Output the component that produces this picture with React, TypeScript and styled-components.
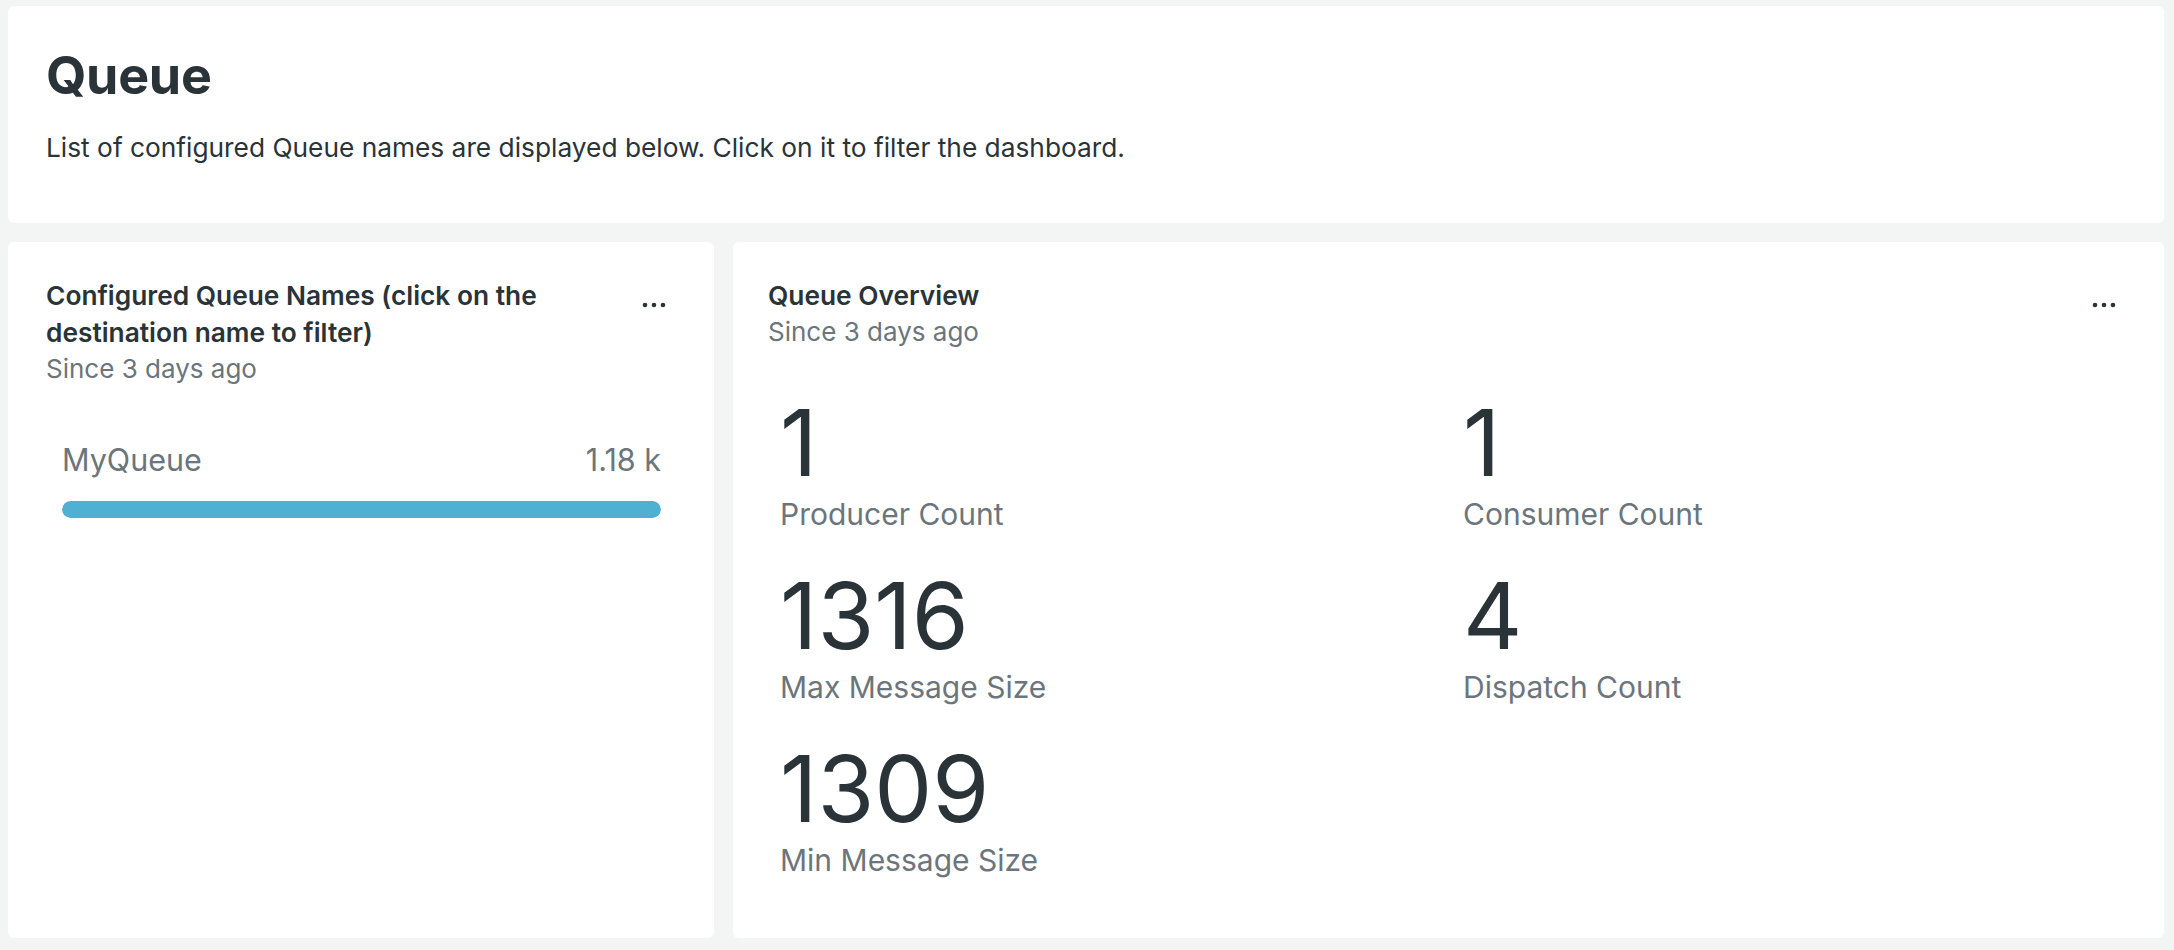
import React from 'react';
import styled, { createGlobalStyle } from 'styled-components';

const GlobalStyle = createGlobalStyle`
  html, body {
    margin: 0;
    padding: 0;
    background: #f3f4f4;
  }
  body {
    font-family: Inter, "Open Sans", "Liberation Sans", sans-serif;
    color: #293338;
  }
  * {
    box-sizing: border-box;
  }
`;

const stats = [
  { value: '1', label: 'Producer Count' },
  { value: '1', label: 'Consumer Count' },
  { value: '1316', label: 'Max Message Size' },
  { value: '4', label: 'Dispatch Count' },
  { value: '1309', label: 'Min Message Size' },
];

const queues = [{ name: 'MyQueue', value: '1.18 k', share: 100 }];

function MoreButton() {
  return (
    <IconButton title="More">
      <svg width="24" height="8" viewBox="0 0 24 8" fill="#293338">
        <circle cx="3" cy="4" r="2.3" />
        <circle cx="12" cy="4" r="2.3" />
        <circle cx="21" cy="4" r="2.3" />
      </svg>
    </IconButton>
  );
}

export default function App() {
  return (
    <>
      <GlobalStyle />
      <Page>
        <Header>
          <Title>Queue</Title>
          <Description>
            List of configured Queue names are displayed below. Click on it to filter the dashboard.
          </Description>
        </Header>
        <Row>
          <Card>
            <CardHeader>
              <div>
                <CardTitle>
                  Configured Queue Names (click on the destination name to filter)
                </CardTitle>
                <CardSubtitle>Since 3 days ago</CardSubtitle>
              </div>
              <MoreButton />
            </CardHeader>
            <QueueList>
              {queues.map(q => (
                <QueueItem key={q.name}>
                  <QueueLine>
                    <span>{q.name}</span>
                    <span>{q.value}</span>
                  </QueueLine>
                  <Track>
                    <Fill style={{ width: `${q.share}%` }} />
                  </Track>
                </QueueItem>
              ))}
            </QueueList>
          </Card>
          <Card $wide>
            <CardHeader>
              <div>
                <CardTitle>Queue Overview</CardTitle>
                <CardSubtitle>Since 3 days ago</CardSubtitle>
              </div>
              <MoreButton />
            </CardHeader>
            <StatGrid>
              {stats.map(s => (
                <Stat key={s.label}>
                  <StatValue>{s.value}</StatValue>
                  <StatLabel>{s.label}</StatLabel>
                </Stat>
              ))}
            </StatGrid>
          </Card>
        </Row>
      </Page>
    </>
  );
}

const Page = styled.div`
  min-height: 100vh;
  padding: 6px 10px 12px 8px;
  display: flex;
  flex-direction: column;
  gap: 19px;
`;

const Header = styled.header`
  background: #ffffff;
  border-radius: 6px;
  padding: 39px 38px 56px;
`;

const Title = styled.h1`
  margin: 0 0 22px;
  font-size: 52px;
  line-height: 62px;
  font-weight: 700;
  color: #293338;
  letter-spacing: -0.3px;
`;

const Description = styled.p`
  margin: 0;
  font-size: 26.3px;
  line-height: 38px;
  color: #293338;
`;

const Row = styled.div`
  flex: 1;
  display: grid;
  grid-template-columns: 706fr 1431fr;
  gap: 19px;
`;

const Card = styled.section<{ $wide?: boolean }>`
  background: #ffffff;
  border-radius: 6px;
  padding: 35px 38px 32px ${p => (p.$wide ? '35px' : '38px')};
  display: flex;
  flex-direction: column;
`;

const CardHeader = styled.div`
  display: flex;
  justify-content: space-between;
  align-items: flex-start;
  gap: 24px;
`;

const CardTitle = styled.h2`
  margin: 0;
  font-size: 26.3px;
  line-height: 37px;
  font-weight: 600;
  color: #293338;
`;

const CardSubtitle = styled.div`
  font-size: 26px;
  line-height: 35px;
  color: #6b757b;
`;

const IconButton = styled.button`
  flex: none;
  width: 44px;
  height: 44px;
  margin-top: 6px;
  border: none;
  background: transparent;
  padding: 0;
  display: flex;
  align-items: center;
  justify-content: center;
  cursor: pointer;
`;

const QueueList = styled.ul`
  list-style: none;
  margin: 54px 0 0;
  padding: 0 15px 0 16px;
`;

const QueueItem = styled.li`
  display: flex;
  flex-direction: column;
  gap: 21px;
`;

const QueueLine = styled.div`
  display: flex;
  justify-content: space-between;
  font-size: 30.5px;
  line-height: 40px;
  color: #6b757b;
`;

const Track = styled.div`
  height: 17px;
  border-radius: 9px;
  background: #e7eaea;
  overflow: hidden;
`;

const Fill = styled.div`
  height: 100%;
  border-radius: 9px;
  background: #50b0d3;
`;

const StatGrid = styled.div`
  margin-top: 44px;
  display: grid;
  grid-template-columns: 1fr 1fr;
  column-gap: 8px;
  row-gap: 32px;
`;

const Stat = styled.div`
  padding-left: 12px;
  display: flex;
  flex-direction: column;
  gap: 2px;
`;

const StatValue = styled.div`
  font-size: 92px;
  line-height: 99px;
  font-weight: 400;
  color: #293338;
`;

const StatLabel = styled.div`
  font-size: 30px;
  line-height: 40px;
  color: #6b757b;
`;
